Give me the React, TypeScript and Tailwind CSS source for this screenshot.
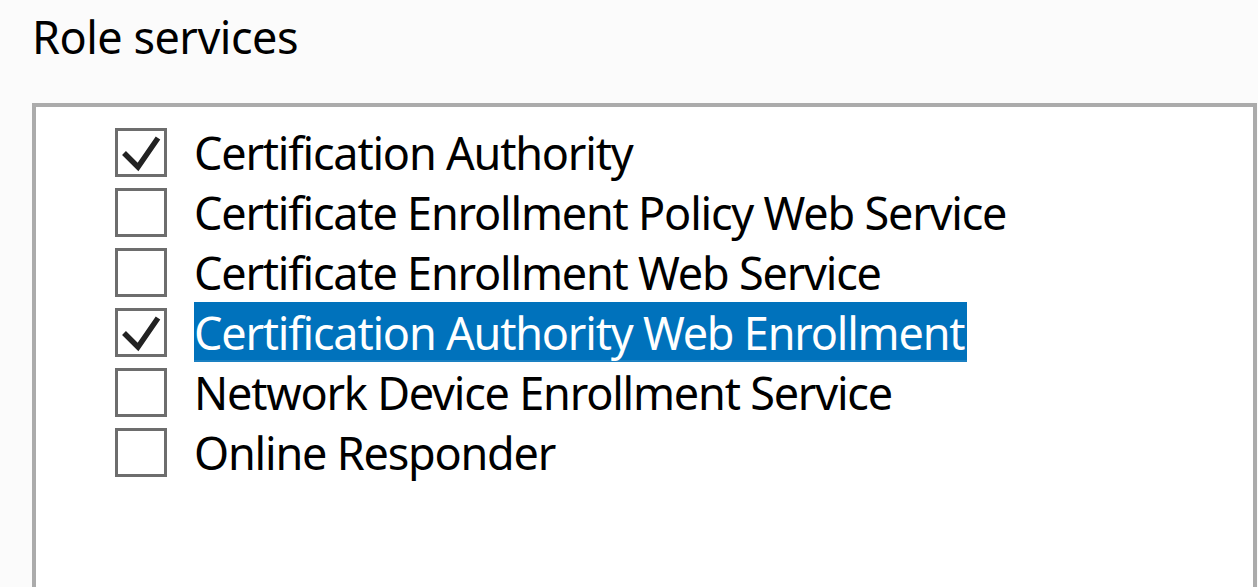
import React from "react";

const items = [
  { label: "Certification Authority", checked: true },
  { label: "Certificate Enrollment Policy Web Service", checked: false },
  { label: "Certificate Enrollment Web Service", checked: false },
  { label: "Certification Authority Web Enrollment", checked: true, selected: true },
  { label: "Network Device Enrollment Service", checked: false },
  { label: "Online Responder", checked: false },
];

function CheckMark() {
  return (
    <svg width="46" height="43" viewBox="0 0 46 43" className="block">
      <path d="M6 22 L20 36 L40 7" fill="none" stroke="#222" strokeWidth="5.5" strokeLinejoin="miter" />
    </svg>
  );
}

export default function App() {
  return (
    <div
      className="w-[1258px] h-[587px] overflow-hidden bg-[#fbfbfb] pl-[32px] text-black"
      style={{ fontFamily: '"Noto Sans", "Open Sans", sans-serif' }}
    >
      <h2 className="pt-[7px] text-[45px] leading-[60px] tracking-[-0.5px] font-normal">Role services</h2>
      <div className="mt-[36px] w-[1225px] h-[500px] bg-white border-[4px] border-[#ababab] pt-[15px] pl-[79px]">
        {items.map((it) => (
          <div key={it.label} className="flex items-center h-[60px]">
            <div className="w-[52px] h-[49px] border-[3px] border-[#6d6d6d] bg-white shrink-0">
              {it.checked && <CheckMark />}
            </div>
            <span
              className={
                "ml-[27px] h-[60px] pt-[3px] pr-[3px] text-[45px] leading-[55px] tracking-[-1.2px] whitespace-nowrap border-b-[2px] " +
                (it.selected ? "bg-[#0072bc] text-white border-[#1a80c2]" : "border-transparent")
              }
            >
              {it.label}
            </span>
          </div>
        ))}
      </div>
    </div>
  );
}
